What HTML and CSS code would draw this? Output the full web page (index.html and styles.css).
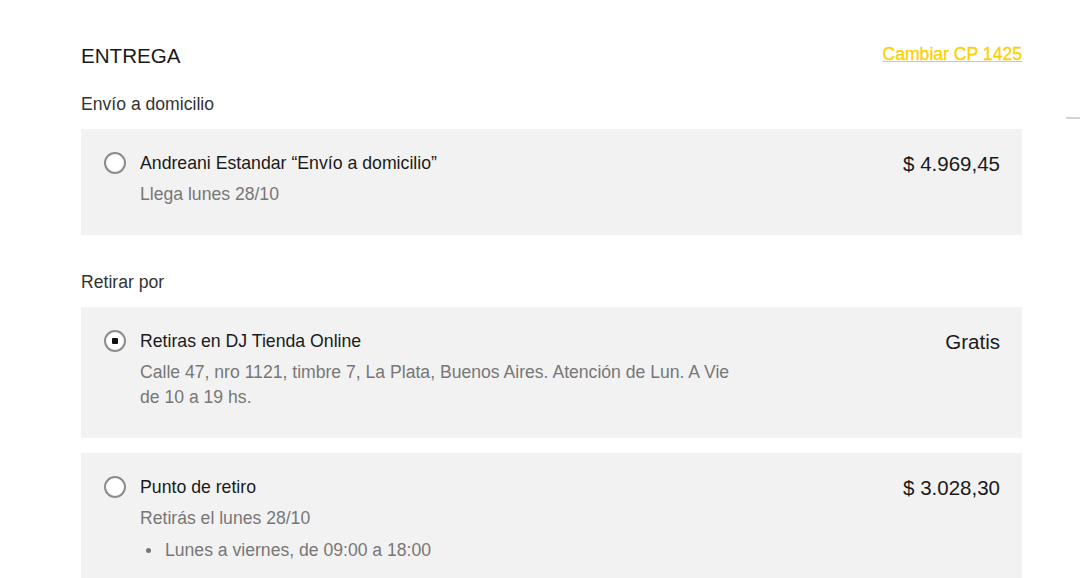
FILE: index.html
```html
<!DOCTYPE html>
<html lang="es">
<head>
<meta charset="utf-8">
<title>Entrega</title>
<link rel="stylesheet" href="styles.css">
</head>
<body>
<div class="side-line"></div>
<main class="page">
  <header class="head">
    <h1 class="title">ENTREGA</h1>
    <a class="change-cp" href="#">Cambiar CP 1425</a>
  </header>

  <h2 class="group-label">Envío a domicilio</h2>
  <div class="card">
    <span class="radio"></span>
    <div class="info">
      <div class="opt-name">Andreani Estandar “Envío a domicilio”</div>
      <div class="opt-sub">Llega lunes 28/10</div>
    </div>
    <div class="price">$ 4.969,45</div>
  </div>

  <h2 class="group-label group-label--gap">Retirar por</h2>
  <div class="card">
    <span class="radio radio--on"></span>
    <div class="info info--narrow">
      <div class="opt-name">Retiras en DJ Tienda Online</div>
      <div class="opt-sub">Calle 47, nro 1121, timbre 7, La Plata, Buenos Aires. Atención de Lun. A Vie de 10 a 19 hs.</div>
    </div>
    <div class="price">Gratis</div>
  </div>

  <div class="card card--spaced">
    <span class="radio"></span>
    <div class="info">
      <div class="opt-name">Punto de retiro</div>
      <div class="opt-sub">Retirás el lunes 28/10</div>
      <ul class="hours">
        <li>Lunes a viernes, de 09:00 a 18:00</li>
      </ul>
    </div>
    <div class="price">$ 3.028,30</div>
  </div>
</main>
</body>
</html>
```

FILE: styles.css
```css
* { box-sizing: border-box; }
html, body {
  margin: 0;
  padding: 0;
  background: #ffffff;
  font-family: "Liberation Sans", Arial, sans-serif;
  color: #222222;
  overflow: hidden;
}
body { width: 1080px; height: 578px; position: relative; }

.side-line {
  position: absolute;
  left: 1066px;
  top: 117px;
  width: 14px;
  height: 2px;
  background: #d4d4d4;
}

.page {
  width: 1022px;
  padding: 44px 0 0 81px;
}

.head {
  display: flex;
  justify-content: space-between;
  align-items: baseline;
}
.title {
  margin: 0;
  font-size: 20.6px;
  font-weight: normal;
  line-height: 24px;
  color: #1a1a1a;
}
.change-cp {
  font-size: 17.6px;
  line-height: 24px;
  color: #fdd000;
  text-decoration: underline;
  position: relative;
  top: -3px;
  -webkit-text-stroke: 0.3px #fdd000;
}

.group-label {
  margin: 24px 0 14px 0;
  font-size: 17.6px;
  font-weight: normal;
  line-height: 22px;
  color: #333333;
}
.group-label--gap { margin-top: 36px; }

.card {
  display: flex;
  align-items: flex-start;
  background: #f2f2f2;
  padding: 22px 22px 28px 23px;
}
.card--spaced { margin-top: 15px; padding-bottom: 40px; }

.radio {
  flex: none;
  width: 22px;
  height: 22px;
  margin-top: 1px;
  border: 2px solid #8c8c8c;
  border-radius: 50%;
  background: #ffffff;
  display: flex;
  align-items: center;
  justify-content: center;
}
.radio--on::after {
  content: "";
  width: 6px;
  height: 6px;
  background: #111111;
  border-radius: 1px;
}

.info {
  flex: 1;
  margin-left: 14px;
}
.info--narrow { flex: 0 1 605px; margin-right: auto; }

.opt-name {
  font-size: 17.7px;
  line-height: 24px;
  color: #1a1a1a;
}
.opt-sub {
  margin-top: 7px;
  font-size: 17.6px;
  line-height: 25px;
  color: #777777;
}

.hours {
  margin: 7px 0 0 0;
  padding: 0;
  list-style: none;
}
.hours li {
  display: flex;
  align-items: center;
  font-size: 17.6px;
  line-height: 25px;
  color: #777777;
}
.hours li::before {
  content: "";
  flex: none;
  width: 5px;
  height: 5px;
  margin: 0 14px 0 6px;
  border-radius: 50%;
  background: #777777;
}

.price {
  flex: none;
  font-size: 20.5px;
  line-height: 24px;
  margin-top: 1px;
  color: #1a1a1a;
}
```
